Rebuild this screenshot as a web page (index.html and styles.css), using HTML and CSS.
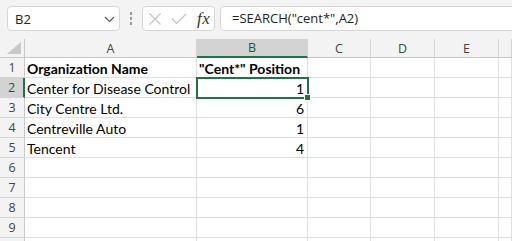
FILE: index.html
```html
<!DOCTYPE html>
<html>
<head>
<meta charset="utf-8">
<link rel="stylesheet" href="styles.css">
</head>
<body>
<div class="toolbar">
  <div class="namebox">
    <span class="name">B2</span>
    <svg class="chev" width="11" height="7" viewBox="0 0 11 7"><path d="M1 1 L5.5 5.5 L10 1" fill="none" stroke="#555" stroke-width="1.1"/></svg>
  </div>
  <div class="dots"><span></span><span></span><span></span></div>
  <div class="fxgroup">
    <svg class="ico" width="14" height="14" viewBox="0 0 14 14"><path d="M1.5 1.5 L12.5 12.5 M12.5 1.5 L1.5 12.5" stroke="#c4c4c4" stroke-width="1.2" fill="none"/></svg>
    <svg class="ico" width="16" height="12" viewBox="0 0 16 12"><path d="M1 5.5 L5.5 10.5 L15 1" stroke="#c4c4c4" stroke-width="1.2" fill="none"/></svg>
    <span class="fx">fx</span>
  </div>
  <div class="formula">=SEARCH("cent*",A2)</div>
</div>
<div class="grid">
  <div class="corner"><svg width="15" height="13" viewBox="0 0 15 13"><path d="M14 0 L14 12 L0 12 Z" fill="#c8c8c8"/></svg></div>
  <div class="ch">A</div>
  <div class="ch sel">B</div>
  <div class="ch">C</div>
  <div class="ch">D</div>
  <div class="ch">E</div>
  <div class="ch"></div>

  <div class="rh">1</div>
  <div class="c b">Organization Name</div>
  <div class="c b">"Cent*" Position</div>
  <div class="c"></div><div class="c"></div><div class="c"></div><div class="c"></div>

  <div class="rh sel">2</div>
  <div class="c">Center for Disease Control</div>
  <div class="c n active">1</div>
  <div class="c"></div><div class="c"></div><div class="c"></div><div class="c"></div>

  <div class="rh">3</div>
  <div class="c">City Centre Ltd.</div>
  <div class="c n">6</div>
  <div class="c"></div><div class="c"></div><div class="c"></div><div class="c"></div>

  <div class="rh">4</div>
  <div class="c">Centreville Auto</div>
  <div class="c n">1</div>
  <div class="c"></div><div class="c"></div><div class="c"></div><div class="c"></div>

  <div class="rh">5</div>
  <div class="c">Tencent</div>
  <div class="c n">4</div>
  <div class="c"></div><div class="c"></div><div class="c"></div><div class="c"></div>

  <div class="rh">6</div>
  <div class="c"></div><div class="c"></div><div class="c"></div><div class="c"></div><div class="c"></div><div class="c"></div>
  <div class="rh">7</div>
  <div class="c"></div><div class="c"></div><div class="c"></div><div class="c"></div><div class="c"></div><div class="c"></div>
  <div class="rh">8</div>
  <div class="c"></div><div class="c"></div><div class="c"></div><div class="c"></div><div class="c"></div><div class="c"></div>
  <div class="rh">9</div>
  <div class="c"></div><div class="c"></div><div class="c"></div><div class="c"></div><div class="c"></div><div class="c"></div>
  <div class="rh"></div>
  <div class="c"></div><div class="c"></div><div class="c"></div><div class="c"></div><div class="c"></div><div class="c"></div>
</div>
</body>
</html>
```
FILE: styles.css
```css
html, body {
  margin: 0;
  padding: 0;
  width: 512px;
  height: 241px;
  overflow: hidden;
  background: #f3f3f3;
}
.toolbar {
  display: flex;
  align-items: flex-start;
  height: 39px;
  box-sizing: border-box;
  padding: 6px 0 0 7px;
  font-family: "Open Sans", "Noto Sans", sans-serif;
}
.namebox {
  width: 113px;
  height: 25px;
  box-sizing: border-box;
  border: 1px solid #d6d6d6;
  border-radius: 4px;
  background: #fff;
  display: flex;
  align-items: center;
  justify-content: space-between;
  padding: 0 4px 0 7px;
}
.name {
  font-size: 13px;
  color: #222;
}
.chev { margin-top: 1px; }
.dots {
  width: 22px;
  height: 25px;
  display: flex;
  flex-direction: column;
  align-items: center;
  justify-content: center;
  gap: 2px;
}
.dots span {
  width: 2px;
  height: 3px;
  background: #9a9a9a;
}
.fxgroup {
  width: 73px;
  height: 25px;
  box-sizing: border-box;
  border: 1px solid #d6d6d6;
  border-radius: 4px;
  background: #fff;
  display: flex;
  align-items: center;
  padding: 0 0 0 5px;
  gap: 9px;
}
.fx {
  font-family: "Liberation Serif", serif;
  font-style: italic;
  font-size: 17px;
  color: #333;
  margin-left: 1px;
  letter-spacing: 0.5px;
}
.formula {
  flex: 1;
  height: 25px;
  margin-left: 5px;
  margin-right: -8px;
  box-sizing: border-box;
  border: 1px solid #d6d6d6;
  border-radius: 4px;
  background: #fff;
  font-size: 13px;
  line-height: 23px;
  padding-left: 11px;
  color: #222;
}
.grid {
  display: grid;
  grid-template-columns: 25px 172px 111px 63px 64px 64px 1fr;
  grid-template-rows: 19px;
  grid-auto-rows: 20px;
  background: #fff;
  font-family: "Lato", "Open Sans", sans-serif;
  font-size: 14px;
  color: #000;
}
.grid > div {
  box-sizing: border-box;
  border-right: 1px solid #e0e0e0;
  border-bottom: 1px solid #e0e0e0;
  overflow: visible;
  white-space: nowrap;
}
.corner {
  background: #f3f3f3;
  display: flex;
  align-items: flex-end;
  justify-content: flex-end;
  padding: 0 2px 2px 0;
  border-right-color: #c8c8c8 !important;
  border-bottom-color: #c8c8c8 !important;
}
.corner svg { display: block; }
.ch {
  background: #f3f3f3;
  text-align: center;
  font-family: "Open Sans", "Noto Sans", sans-serif;
  font-size: 12.5px;
  line-height: 19px;
  color: #444;
  border-right-color: #d4d4d4 !important;
  border-bottom-color: #c8c8c8 !important;
}
.ch.sel {
  background: #d3d3d3;
  color: #185c37;
  border-bottom: 2px solid #217346 !important;
  line-height: 18px;
}
.rh {
  background: #f3f3f3;
  text-align: center;
  font-family: "Open Sans", "Noto Sans", sans-serif;
  font-size: 12.5px;
  line-height: 20px;
  color: #444;
  border-right-color: #c8c8c8 !important;
  border-bottom-color: #d4d4d4 !important;
}
.rh.sel {
  background: #d3d3d3;
  color: #185c37;
  border-right: 2px solid #217346 !important;
}
.c {
  padding: 1px 3px 0 2px;
  line-height: 19px;
}
.c.b { font-weight: bold; }
.c.n { text-align: right; }
.c.active {
  position: relative;
  z-index: 2;
  outline: 2px solid #217346;
  outline-offset: -1px;
}
.c.active::after {
  content: "";
  position: absolute;
  right: -4px;
  bottom: -4px;
  width: 5px;
  height: 5px;
  background: #217346;
  border: 1px solid #fff;
}
```
